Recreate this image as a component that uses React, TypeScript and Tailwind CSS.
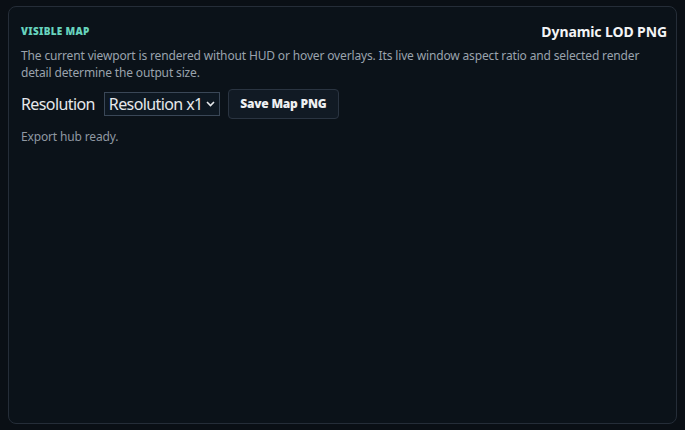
import React from "react";

export default function App() {
  return (
    <div
      className="w-[685px] h-[430px] bg-[#0a0f15] pt-[6px] pl-[8px] pr-[8px] pb-[6px]"
      style={{ fontFamily: '"Noto Sans", "Open Sans", sans-serif' }}
    >
      <div className="h-full rounded-[8px] border border-[#252d38] bg-[#0b1219] px-[12px] pt-[15px] flex flex-col">
        <div className="flex items-center justify-between h-[18px]">
          <span className="text-[10px] font-black tracking-[0.03em] uppercase text-[#67d3bd]">
            Visible map
          </span>
          <span className="text-[14px] font-bold text-[#f3f4f6] mr-[-3px] tracking-[-0.1px]">Dynamic LOD PNG</span>
        </div>
        <p className="mt-[7px] text-[12px] leading-[17px] tracking-[-0.15px] text-[#9aa3ad]">
          The current viewport is rendered without HUD or hover overlays. Its live window aspect ratio and selected render
          detail determine the output size.
        </p>
        <div className="mt-[8px] flex items-center h-[30px]">
          <span className="text-[16px] tracking-[-0.6px] text-[#e6e8eb]">Resolution</span>
          <div className="relative ml-[9px]">
            <select
              className="appearance-none h-[24px] w-[116px] border border-[#3a4757] bg-[#0e1822] text-[16px] tracking-[-0.6px] text-[#e6e8eb] pl-[4px] pr-[14px] leading-[22px] outline-none"
              style={{ fontFamily: '"Noto Sans", "Open Sans", sans-serif' }}
              defaultValue="1"
            >
              <option value="1">Resolution x1</option>
              <option value="2">Resolution x2</option>
            </select>
            <svg
              className="pointer-events-none absolute right-[5px] top-[9px]"
              width="9"
              height="6"
              viewBox="0 0 9 6"
              fill="none"
            >
              <path d="M1 1l3.5 3.5L8 1" stroke="#e6e8eb" strokeWidth="1.6" />
            </svg>
          </div>
          <button className="ml-[8px] h-[30px] w-[111px] rounded-[4px] border border-[#2a3441] bg-[#111a24] text-[12px] font-black tracking-[-0.2px] text-[#eef0f2]">
            Save Map PNG
          </button>
        </div>
        <p className="mt-[9px] text-[12px] tracking-[-0.15px] text-[#8f98a2]">Export hub ready.</p>
      </div>
    </div>
  );
}
